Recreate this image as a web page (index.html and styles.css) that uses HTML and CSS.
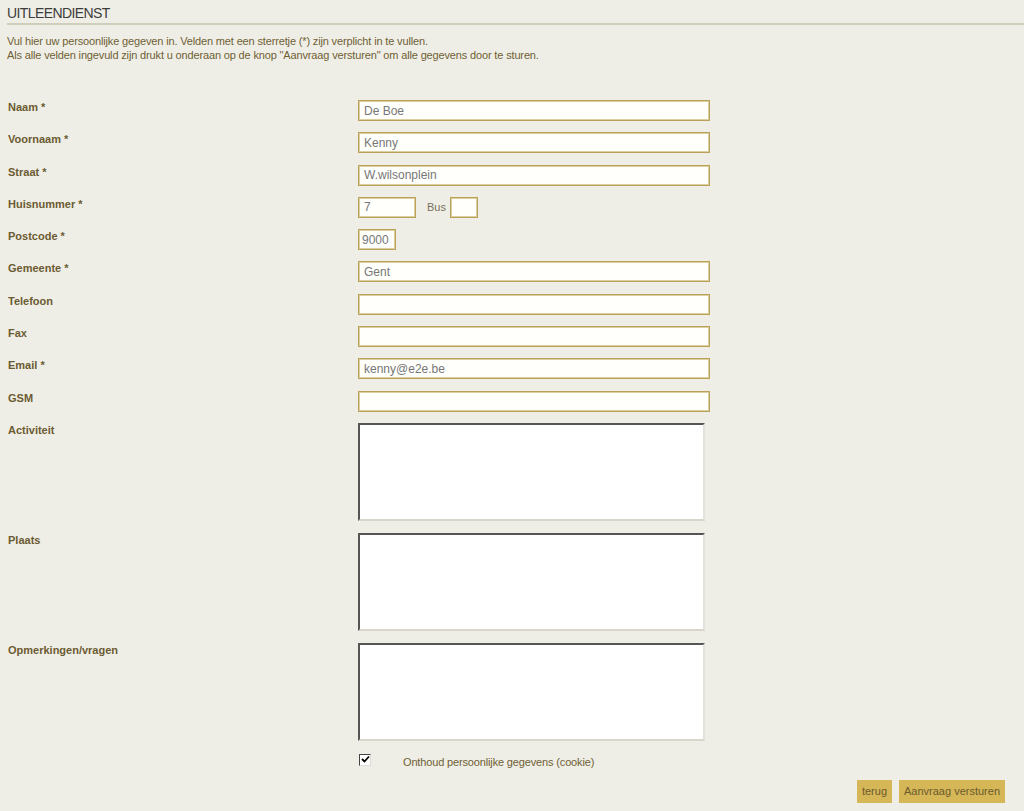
FILE: index.html
```html
<!DOCTYPE html>
<html lang="nl">
<head>
<meta charset="utf-8">
<title>Uitleendienst</title>
<link rel="stylesheet" href="styles.css">
</head>
<body>
<div class="page">
  <h1 class="title">UITLEENDIENST</h1>
  <p class="intro">Vul hier uw persoonlijke gegeven in. Velden met een sterretje (*) zijn verplicht in te vullen.<br>Als alle velden ingevuld zijn drukt u onderaan op de knop "Aanvraag versturen" om alle gegevens door te sturen.</p>

  <form class="form">
    <div class="row"><label class="lbl">Naam *</label><div class="field"><input class="txt" type="text" value="De Boe"></div></div>
    <div class="row"><label class="lbl">Voornaam *</label><div class="field"><input class="txt" type="text" value="Kenny"></div></div>
    <div class="row"><label class="lbl">Straat *</label><div class="field"><input class="txt" type="text" value="W.wilsonplein"></div></div>
    <div class="row"><label class="lbl">Huisnummer *</label><div class="field inline"><input class="txt nr" type="text" value="7"><span class="bus">Bus</span><input class="txt busnr" type="text" value=""></div></div>
    <div class="row"><label class="lbl">Postcode *</label><div class="field"><input class="txt pc" type="text" value="9000"></div></div>
    <div class="row"><label class="lbl">Gemeente *</label><div class="field"><input class="txt" type="text" value="Gent"></div></div>
    <div class="row"><label class="lbl">Telefoon</label><div class="field"><input class="txt" type="text" value=""></div></div>
    <div class="row"><label class="lbl">Fax</label><div class="field"><input class="txt" type="text" value=""></div></div>
    <div class="row"><label class="lbl">Email *</label><div class="field"><input class="txt" type="text" value="kenny@e2e.be"></div></div>
    <div class="row"><label class="lbl">GSM</label><div class="field"><input class="txt" type="text" value=""></div></div>
    <div class="row area-row"><label class="lbl">Activiteit</label><div class="field"><textarea class="area"></textarea></div></div>
    <div class="row area-row"><label class="lbl">Plaats</label><div class="field"><textarea class="area"></textarea></div></div>
    <div class="row area-row"><label class="lbl">Opmerkingen/vragen</label><div class="field"><textarea class="area"></textarea></div></div>
    <div class="row check-row"><span class="lbl"></span><div class="field check"><span class="box"><svg width="9" height="9" viewBox="0 0 9 9"><path d="M1 4 L3.5 6.5 L8 1.5" fill="none" stroke="#000" stroke-width="1.8"/></svg></span><span class="check-text">Onthoud persoonlijke gegevens (cookie)</span></div></div>
    <div class="actions"><button type="button" class="btn">terug</button><button type="button" class="btn">Aanvraag versturen</button></div>
  </form>
</div>
</body>
</html>
```

FILE: styles.css
```css
html, body {
  margin: 0;
  padding: 0;
  background: #efeee6;
}
body {
  font-family: "Liberation Sans", Arial, sans-serif;
  font-size: 11px;
  color: #6b5b32;
}
.page {
  padding: 5px 0 0 7px;
}
.title {
  margin: 0;
  font-size: 14px;
  font-weight: normal;
  color: #3c3c3c;
  letter-spacing: -0.6px;
  line-height: 17px;
  padding-bottom: 1px;
  border-bottom: 2px solid #cfcdbb;
}
.intro {
  margin: 9px 0 0 0;
  line-height: 14px;
  letter-spacing: -0.15px;
  color: #6e5f35;
}
.form {
  margin-top: 38px;
  display: flex;
  flex-direction: column;
}
.row {
  display: grid;
  grid-template-columns: 351px 1fr;
  align-items: start;
  margin-bottom: 11.3px;
}
.lbl {
  font-weight: bold;
  font-size: 11px;
  line-height: 14px;
  padding-left: 1px;
  color: #6b5b32;
}
.field {
  display: flex;
  align-items: center;
}
.txt {
  box-sizing: border-box;
  width: 352px;
  height: 21px;
  margin: 0;
  padding: 0 0 0 5px;
  border: 1px solid #b9a258;
  box-shadow: inset 0 0 0 1px #ddd0a0;
  background: #fffffc;
  font-family: "Liberation Sans", Arial, sans-serif;
  font-size: 12px;
  color: #777;
  outline: none;
}
.nr { width: 58px; }
.busnr { width: 28px; }
.pc { width: 38px; padding-left: 3px; }
.bus {
  margin: 0 4px 0 11px;
  color: #7a7060;
  font-size: 11px;
}
.area-row {
  margin-bottom: 12px;
}
.area {
  box-sizing: border-box;
  width: 347px;
  height: 98px;
  margin: 0;
  padding: 2px;
  background: #fff;
  border-style: solid;
  border-width: 2px;
  border-color: #555 #e4e2da #d8d6cc #555;
  resize: none;
  outline: none;
}
.check-row {
  margin-top: 1px;
  margin-bottom: 14px;
}
.check {
  align-items: center;
  padding-left: 1px;
}
.box {
  box-sizing: border-box;
  width: 12px;
  height: 12px;
  background: #fff;
  border-style: solid;
  border-width: 1px;
  border-color: #444 #ddd #ddd #444;
  display: flex;
  align-items: center;
  justify-content: center;
}
.check-text {
  margin-left: 32px;
  color: #6e5f35;
  letter-spacing: -0.15px;
  position: relative;
  top: 2px;
}
.actions {
  display: flex;
  justify-content: flex-end;
  gap: 7px;
  padding-right: 19px;
}
.btn {
  height: 23px;
  margin: 0;
  padding: 0 5px;
  border: 0;
  background: #d6b758;
  color: #6a5a2c;
  font-family: "Liberation Sans", Arial, sans-serif;
  font-size: 11px;
}
```
